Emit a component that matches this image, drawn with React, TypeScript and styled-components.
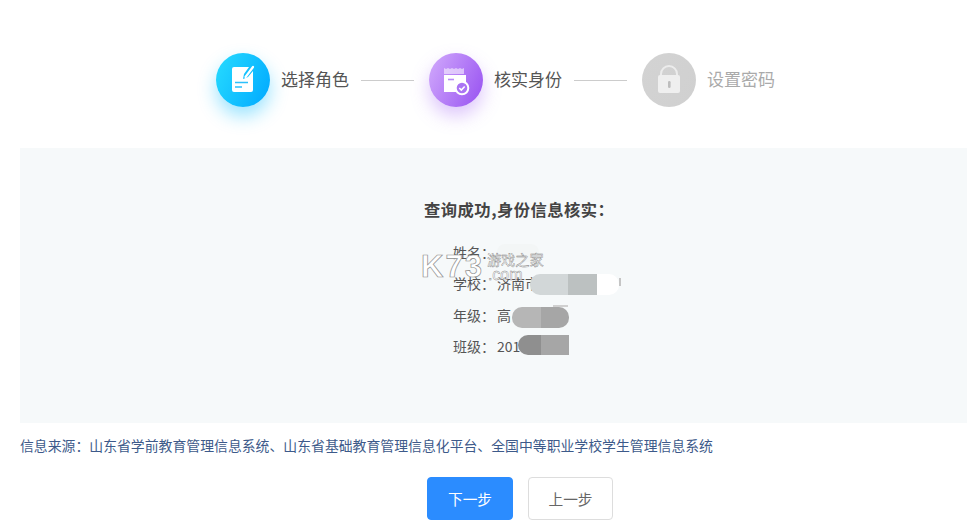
import React from "react";
import styled, { createGlobalStyle } from "styled-components";

const Global = createGlobalStyle`
  html, body { margin: 0; padding: 0; background: #fff; overflow: hidden; }
  body { font-family: "Noto Sans CJK SC", "Roboto", sans-serif; }
`;

const Page = styled.div`
  position: relative;
  width: 967px;
  height: 532px;
  overflow: hidden;
`;

const Stepper = styled.div`
  display: flex;
  align-items: center;
  height: 54px;
  padding: 53px 0 41px 216px;
`;

const Step = styled.div`
  display: flex;
  align-items: center;
  gap: 11px;
`;

const Badge = styled.div<{ $from: string; $to: string; $glow: string }>`
  width: 54px;
  height: 54px;
  border-radius: 50%;
  flex: none;
  background: linear-gradient(115deg, ${(p) => p.$from}, ${(p) => p.$to});
  box-shadow: ${(p) => p.$glow};
  svg { display: block; }
`;

const StepLabel = styled.span<{ $muted?: boolean }>`
  font-size: 17px;
  line-height: 24px;
  padding-bottom: 2px;
  white-space: nowrap;
  color: ${(p) => (p.$muted ? "#aaaaaa" : "#555555")};
`;

const Connector = styled.div`
  width: 53px;
  height: 1px;
  background: #cccccc;
  margin: 0 15.5px 0 11.5px;
  flex: none;
`;

const Panel = styled.section`
  margin-left: 20px;
  height: 275px;
  box-sizing: border-box;
  padding: 49px 0 0 404px;
  background: #f6f9fa;
`;

const Title = styled.h2`
  margin: 0 0 15px;
  font-size: 16.3px;
  line-height: 24px;
  font-weight: 700;
  letter-spacing: 0.5px;
  color: #444444;
`;

const Details = styled.dl`
  margin: 0 0 0 29px;
`;

const Row = styled.div`
  position: relative;
  display: flex;
  height: 31.5px;
  align-items: center;
  font-size: 14px;
  color: #555555;
`;

const Term = styled.dt`
  width: 44px;
  flex: none;
`;

const Value = styled.dd`
  margin: 0;
  white-space: nowrap;
`;

const Smudge = styled.div<{
  $left: number;
  $width: number;
  $top: number;
  $height: number;
  $bg: string;
  $radius?: string;
}>`
  position: absolute;
  left: ${(p) => p.$left}px;
  top: ${(p) => p.$top}px;
  width: ${(p) => p.$width}px;
  height: ${(p) => p.$height}px;
  background: ${(p) => p.$bg};
  border-radius: ${(p) => p.$radius ?? "0"};
`;

const Source = styled.p`
  margin: 12px 0 0 20px;
  font-size: 13.86px;
  line-height: 20px;
  white-space: nowrap;
  color: #3d5a8a;
`;

const Actions = styled.div`
  display: flex;
  gap: 15px;
  margin: 22px 0 0 427px;
`;

const Button = styled.button<{ $primary?: boolean }>`
  width: ${(p) => (p.$primary ? 86 : 85)}px;
  height: 43px;
  box-sizing: border-box;
  padding: 0;
  border-radius: 4px;
  font-family: inherit;
  font-size: 14.7px;
  border: 1px solid ${(p) => (p.$primary ? "#2b8cff" : "#dddddd")};
  background: ${(p) => (p.$primary ? "#2b8cff" : "#ffffff")};
  color: ${(p) => (p.$primary ? "#ffffff" : "#666666")};
`;

const Watermark = styled.div`
  position: absolute;
  left: 421px;
  top: 251px;
  display: flex;
  pointer-events: none;
`;

const Brand = styled.span`
  font-family: "Liberation Sans", sans-serif;
  font-size: 31px;
  line-height: 32px;
  font-weight: 700;
  letter-spacing: 2px;
  color: #ffffff;
  -webkit-text-stroke: 0.7px #8f8f8f;
`;

const BrandSide = styled.div`
  display: flex;
  flex-direction: column;
  align-items: flex-start;
  margin-left: 3px;
  color: #ffffff;
  -webkit-text-stroke: 0.4px #808080;
`;

const BrandName = styled.span`
  font-size: 14.2px;
  line-height: 17px;
`;

const BrandDomain = styled.span`
  font-family: "Liberation Sans", sans-serif;
  font-size: 16px;
  line-height: 14px;
  margin-left: 1px;
`;

const NoteIcon = () => (
  <svg width="54" height="54" viewBox="0 0 54 54">
    <path d="M18 14h15l-5 7-1 5 5-2 5-6v19a2 2 0 0 1-2 2H18a2 2 0 0 1-2-2V16a2 2 0 0 1 2-2z" fill="#fff" />
    <path d="M29.5 24l7.5-10" stroke="#fff" strokeWidth="2.2" strokeLinecap="round" />
    <path d="M19 29.5h13M19 34h7" stroke="#2cc0fb" strokeWidth="1.6" />
  </svg>
);

const CalendarIcon = () => (
  <svg width="54" height="54" viewBox="0 0 54 54">
    <path d="M15 15l2 1 2-1 2 1 2-1 2 1 2-1 2 1 2-1 2 1 2-1v6H15z" fill="#fff" opacity="0.55" />
    <path d="M15 22h22v9a8 8 0 0 0-8 8H15z" fill="#fff" />
    <path d="M19 26.5h6" stroke="#b98af7" strokeWidth="1.6" />
    <circle cx="33" cy="35" r="6.3" fill="#ab74f4" stroke="#fff" strokeWidth="2" />
    <path d="M30.3 35l2 2 3.4-3.5" fill="none" stroke="#fff" strokeWidth="1.6" />
  </svg>
);

const LockIcon = () => (
  <svg width="54" height="54" viewBox="0 0 54 54">
    <path d="M19 23v-2a8 8 0 0 1 16 0v2" fill="none" stroke="#ececec" strokeWidth="2" />
    <rect x="16" y="22" width="22" height="18" rx="2" fill="#efefef" />
    <rect x="26" y="28" width="2.6" height="7" rx="1.3" fill="#bdbdbd" />
  </svg>
);

const COLON = "\uFF1A";

export default function App() {
  return (
    <Page>
      <Global />
      <Stepper>
        <Step>
          <Badge $from="#27dcff" $to="#00a8ff" $glow="0 9px 18px rgba(20,190,255,0.42)">
            <NoteIcon />
          </Badge>
          <StepLabel>选择角色</StepLabel>
        </Step>
        <Connector />
        <Step>
          <Badge $from="#d2abfc" $to="#9750f1" $glow="0 9px 18px rgba(165,105,245,0.38)">
            <CalendarIcon />
          </Badge>
          <StepLabel>核实身份</StepLabel>
        </Step>
        <Connector />
        <Step>
          <Badge $from="#d3d3d3" $to="#d0d0d0" $glow="none">
            <LockIcon />
          </Badge>
          <StepLabel $muted>设置密码</StepLabel>
        </Step>
      </Stepper>

      <Panel>
        <Title>查询成功,身份信息核实{COLON}</Title>
        <Details>
          <Row>
            <Term>姓名{COLON}</Term>
            <Value />
            <Smudge $left={44} $width={42} $top={8} $height={18} $bg="#f3f6f6" $radius="8px" />
          </Row>
          <Row>
            <Term>学校{COLON}</Term>
            <Value>济南市</Value>
            <Smudge $left={77} $width={39} $top={6} $height={21} $bg="#d2d7d8" $radius="10px 0 0 10px" />
            <Smudge $left={115} $width={29} $top={6} $height={21} $bg="#bcc1c1" />
            <Smudge $left={144} $width={22} $top={6} $height={21} $bg="#ffffff" $radius="0 10px 10px 0" />
            <Smudge $left={166} $width={2} $top={10} $height={8} $bg="#c5c5c5" />
          </Row>
          <Row>
            <Term>年级{COLON}</Term>
            <Value>高</Value>
            <Smudge $left={59} $width={29} $top={7.5} $height={21} $bg="#b6b6b6" $radius="10px 0 0 10px" />
            <Smudge $left={88} $width={28} $top={7.5} $height={21} $bg="#a6a6a6" $radius="0 10px 10px 0" />
            <Smudge $left={100} $width={15} $top={6} $height={2} $bg="#d0d0d0" />
          </Row>
          <Row>
            <Term>班级{COLON}</Term>
            <Value>201</Value>
            <Smudge $left={65} $width={23} $top={4} $height={20} $bg="#8f8f8f" $radius="10px 0 0 10px" />
            <Smudge $left={88} $width={28} $top={4} $height={20} $bg="#a6a6a6" />
          </Row>
        </Details>
      </Panel>

      <Source>信息来源{COLON}山东省学前教育管理信息系统、山东省基础教育管理信息化平台、全国中等职业学校学生管理信息系统</Source>

      <Actions>
        <Button $primary>下一步</Button>
        <Button>上一步</Button>
      </Actions>

      <Watermark>
        <Brand>K73</Brand>
        <BrandSide>
          <BrandName>游戏之家</BrandName>
          <BrandDomain>.com</BrandDomain>
        </BrandSide>
      </Watermark>
    </Page>
  );
}
